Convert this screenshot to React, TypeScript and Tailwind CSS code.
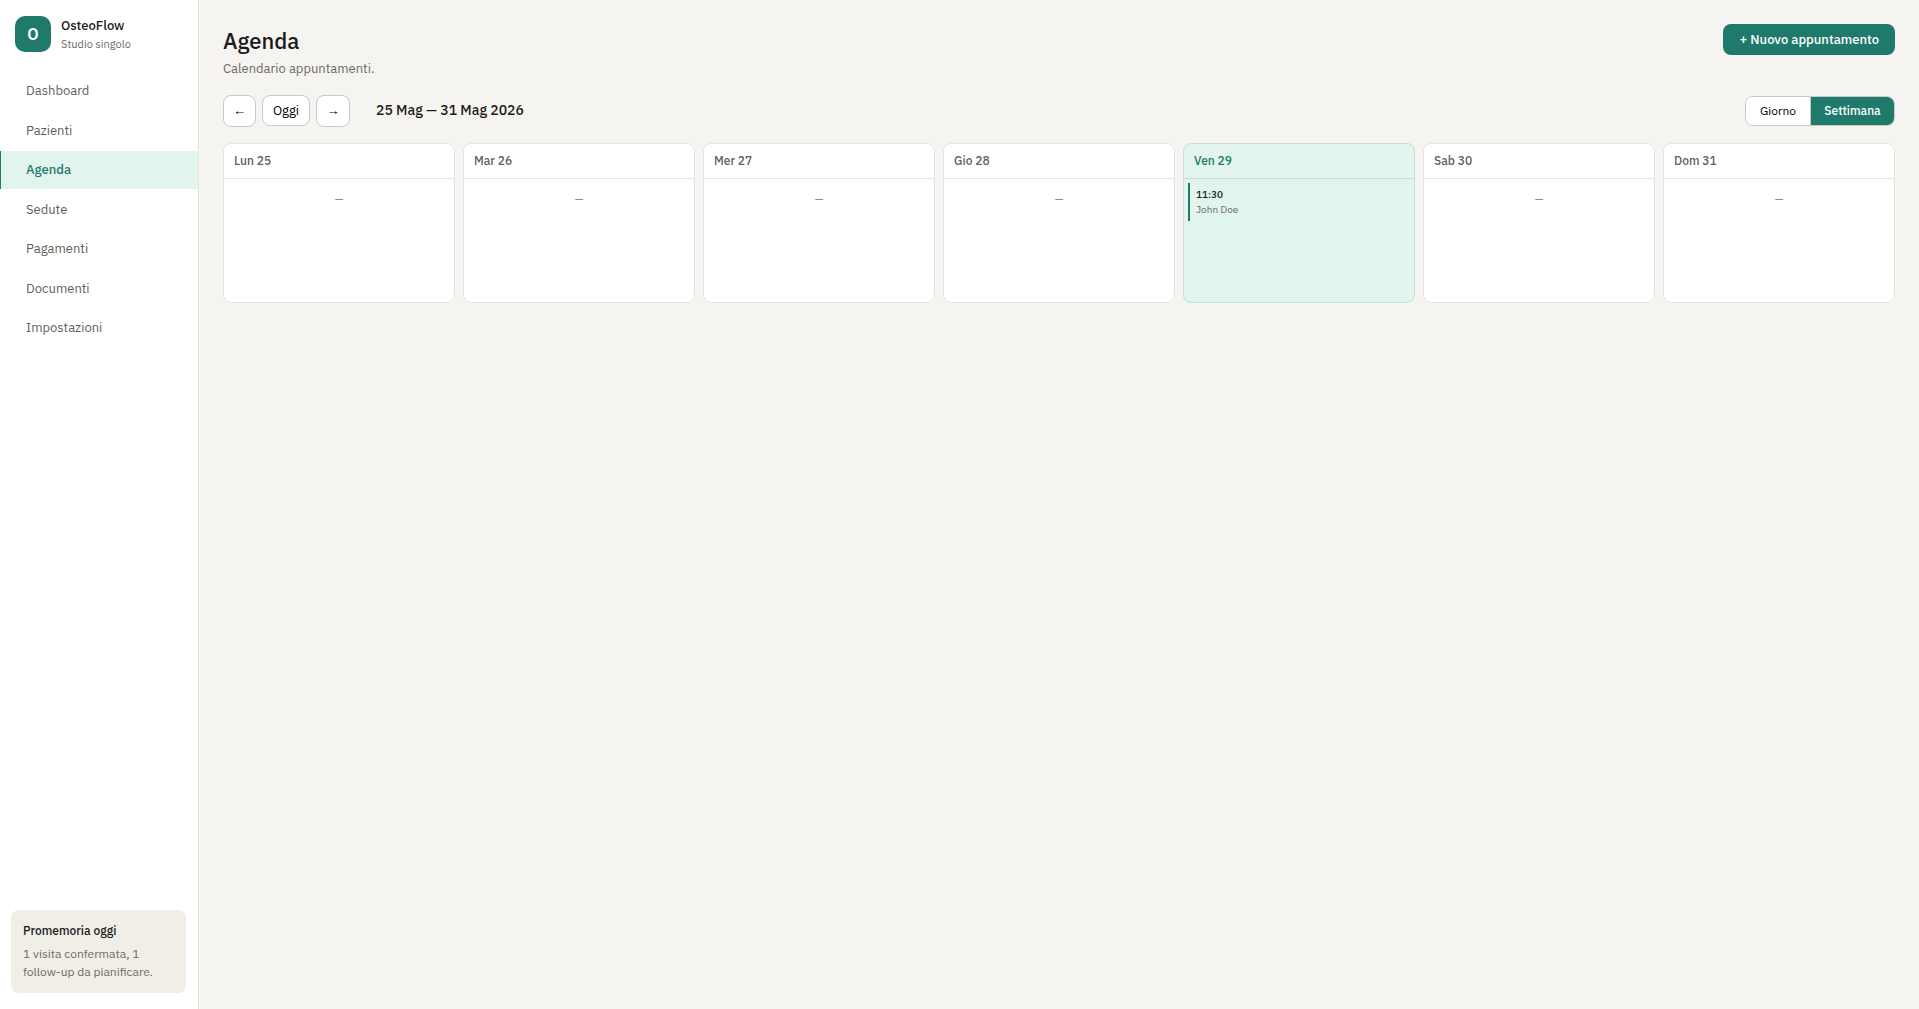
type Day = { label: string; today?: boolean; events: { time: string; patient: string }[] };

const navItems = ["Dashboard", "Pazienti", "Agenda", "Sedute", "Pagamenti", "Documenti", "Impostazioni"];

const days: Day[] = [
  { label: "Lun 25", events: [] },
  { label: "Mar 26", events: [] },
  { label: "Mer 27", events: [] },
  { label: "Gio 28", events: [] },
  { label: "Ven 29", today: true, events: [{ time: "11:30", patient: "John Doe" }] },
  { label: "Sab 30", events: [] },
  { label: "Dom 31", events: [] },
];

function Sidebar() {
  return (
    <aside className="flex w-[199px] shrink-0 flex-col border-r border-[#e4e4e4] bg-white pt-4 pb-4">
      <div className="flex items-center gap-2.5 pl-[15px]">
        <div className="flex size-9 items-center justify-center rounded-[10px] bg-[#1f7a6b] text-base font-semibold text-white">
          O
        </div>
        <div>
          <div className="text-[13px] leading-5 font-medium">OsteoFlow</div>
          <div className="text-[11px] leading-4 text-[#6b6b68]">Studio singolo</div>
        </div>
      </div>
      <nav className="mt-5 flex h-[275px] flex-col justify-between text-[13px]">
        {navItems.map((item) => (
          <a
            key={item}
            href="#"
            aria-current={item === "Agenda" ? "page" : undefined}
            className={
              item === "Agenda"
                ? "flex h-[38px] items-center border-l border-[#1f7a6b] bg-[#e1f4ed] pl-[25px] font-medium text-[#1f7a6b]"
                : "flex h-[38px] items-center border-l border-transparent pl-[25px] text-[#5f5f5c]"
            }
          >
            {item}
          </a>
        ))}
      </nav>
      <div className="mt-auto mr-3 ml-[11px] rounded-lg bg-[#f1eee7] p-3 text-xs">
        <div className="mb-[5px] leading-[18px] font-medium">Promemoria oggi</div>
        <p className="leading-[18px] text-[#6b6b68]">1 visita confermata, 1 follow-up da pianificare.</p>
      </div>
    </aside>
  );
}

function DayColumn({ day }: { day: Day }) {
  return (
    <section
      className={
        day.today
          ? "min-h-40 rounded-lg border border-[#c8dfd6] bg-[#e1f4ed]"
          : "min-h-40 rounded-lg border border-[#e5e5e5] bg-white"
      }
    >
      <h2
        className={
          day.today
            ? "border-b border-[#c8dfd6] px-2.5 py-2 text-xs leading-[18px] font-medium text-[#1f7a6b]"
            : "border-b border-[#e5e5e5] px-2.5 py-2 text-xs leading-[18px] font-medium text-[#5f5f5c]"
        }
      >
        {day.label}
      </h2>
      <div className="p-1">
        {day.events.length === 0 ? (
          <p className="py-2 text-center text-[11px] leading-4 text-[#888780]">—</p>
        ) : (
          day.events.map((event) => (
            <a
              key={event.time}
              href="#"
              className="block border-l-2 border-[#1f7a6b] px-1.5 py-1 text-[10px] leading-[15px]"
            >
              <div className="font-medium">{event.time}</div>
              <div className="text-[#6b6b68]">{event.patient}</div>
            </a>
          ))
        )}
      </div>
    </section>
  );
}

export default function App() {
  return (
    <div className="flex min-h-screen bg-[#f5f4f0] font-['IBM_Plex_Sans',Roboto,sans-serif] text-[#1a1a1a]">
      <Sidebar />
      <main className="min-w-0 flex-1 p-6">
        <header className="flex items-start justify-between">
          <div>
            <h1 className="mb-0.5 text-[22px] leading-[33px] font-medium">Agenda</h1>
            <p className="text-[13px] leading-5 text-[#6b6b68]">Calendario appuntamenti.</p>
          </div>
          <button type="button" className="h-[31px] rounded-lg bg-[#1f7a6b] px-4 text-[13px] font-medium text-white">
            + Nuovo appuntamento
          </button>
        </header>
        <div className="mt-4 flex items-center justify-between">
          <div className="flex items-start gap-1.5 text-[13px] text-black">
            <button
              type="button"
              aria-label="Settimana precedente"
              className="h-8 w-[33px] rounded-lg border border-[#c9c9c7] bg-white font-['Liberation_Sans',sans-serif]"
            >
              ←
            </button>
            <button type="button" className="h-[31px] w-12 rounded-lg border border-[#c9c9c7] bg-white">
              Oggi
            </button>
            <button
              type="button"
              aria-label="Settimana successiva"
              className="h-8 w-[34px] rounded-lg border border-[#c9c9c7] bg-white font-['Liberation_Sans',sans-serif]"
            >
              →
            </button>
            <span className="ml-5 text-sm leading-[30px] font-medium text-[#1a1a1a]">25 Mag — 31 Mag 2026</span>
          </div>
          <div className="flex h-[30px] overflow-hidden rounded-lg border border-[#c9c9c7] text-xs">
            <button type="button" aria-pressed="false" className="w-[65px] border-r border-[#c9c9c7] bg-white text-black">
              Giorno
            </button>
            <button type="button" aria-pressed="true" className="w-[83px] bg-[#1f7a6b] font-medium text-white">
              Settimana
            </button>
          </div>
        </div>
        <div className="mt-4 grid grid-cols-7 gap-2">
          {days.map((day) => (
            <DayColumn key={day.label} day={day} />
          ))}
        </div>
      </main>
    </div>
  );
}
